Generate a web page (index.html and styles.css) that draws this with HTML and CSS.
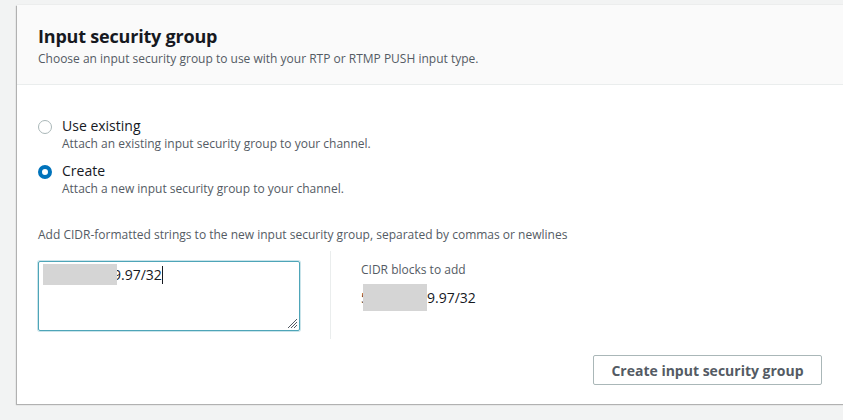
FILE: index.html
```html
<!DOCTYPE html>
<html>
<head>
<meta charset="utf-8">
<link rel="stylesheet" href="styles.css">
</head>
<body>
<div class="page">
  <section class="card">
    <header class="card-header">
      <h2 class="title">Input security group</h2>
      <p class="subtitle">Choose an input security group to use with your RTP or RTMP PUSH input type.</p>
    </header>
    <div class="card-body">
      <div class="radio-group">
        <label class="radio">
          <span class="radio-ctrl"></span>
          <span class="radio-text">
            <span class="radio-label">Use existing</span>
            <span class="radio-desc">Attach an existing input security group to your channel.</span>
          </span>
        </label>
        <label class="radio">
          <span class="radio-ctrl checked"></span>
          <span class="radio-text">
            <span class="radio-label">Create</span>
            <span class="radio-desc">Attach a new input security group to your channel.</span>
          </span>
        </label>
      </div>
      <p class="field-label">Add CIDR-formatted strings to the new input security group, separated by commas or newlines</p>
      <div class="cidr-row">
        <div class="cidr-left">
          <div class="textarea">
            <span class="redact redact-a"></span><span class="ta-text">9.97/32</span><span class="caret"></span>
            <svg class="grip" width="12" height="12" viewBox="0 0 12 12"><path d="M11 2 L2 11 M11 5 L5 11 M11 8 L8 11" stroke="#545b64" stroke-width="1" fill="none"/></svg>
          </div>
        </div>
        <div class="cidr-right">
          <div class="cidr-title">CIDR blocks to add</div>
          <div class="cidr-value"><span class="first">5</span><span class="redact redact-b"></span><span>9.97/32</span></div>
        </div>
      </div>
      <div class="actions">
        <button class="btn">Create input security group</button>
      </div>
    </div>
  </section>
</div>
</body>
</html>
```

FILE: styles.css
```css
* { box-sizing: border-box; }
html, body { margin: 0; padding: 0; }
body {
  background: #f2f3f3;
  font-family: "Open Sans", "Liberation Sans", Arial, sans-serif;
  color: #16191f;
  width: 843px;
  height: 420px;
  overflow: hidden;
}
.page {
  padding: 5px 0 0 17px;
}
.card {
  background: #fff;
  width: 832px;
  height: 399px;
  box-shadow: -1px 1px 1px rgba(0,0,0,0.25), 0 0 1px rgba(0,0,0,0.15);
  display: flex;
  flex-direction: column;
}
.card-header {
  background: #fafafa;
  border-bottom: 1px solid #eaeded;
  padding: 20px 20px 17px 21px;
}
.title {
  margin: 0;
  font-size: 18px;
  line-height: 22px;
  font-weight: 700;
  color: #16191f;
  letter-spacing: -0.2px;
}
.subtitle {
  margin: 4px 0 0;
  font-size: 12px;
  line-height: 16px;
  color: #545b64;
}
.card-body {
  padding: 31px 27px 0 21px;
  flex: 1;
  display: flex;
  flex-direction: column;
}
.radio-group {
  display: flex;
  flex-direction: column;
  gap: 9px;
}
.radio {
  display: flex;
  align-items: flex-start;
  gap: 10px;
}
.radio-ctrl {
  width: 14px;
  height: 14px;
  border-radius: 50%;
  border: 1.5px solid #aab7b8;
  margin-top: 4px;
  flex: none;
}
.radio-ctrl.checked {
  border: 4px solid #0073bb;
  background: #fff;
}
.radio-text {
  display: flex;
  flex-direction: column;
}
.radio-label {
  font-size: 14px;
  line-height: 20px;
  color: #16191f;
}
.radio-desc {
  font-size: 12px;
  line-height: 16px;
  color: #545b64;
}
.field-label {
  margin: 30px 0 0;
  font-size: 12px;
  line-height: 16px;
  color: #545b64;
}
.cidr-row {
  display: flex;
  margin-top: 8px;
  height: 88px;
}
.cidr-left {
  width: 292px;
  padding-top: 10px;
}
.textarea {
  position: relative;
  width: 262px;
  height: 70px;
  border: 1px solid #4ea5b8;
  box-shadow: 0 0 0 1px rgba(78,165,184,0.3);
  border-radius: 2px;
  padding: 2px 4px;
  display: flex;
  align-items: flex-start;
  font-size: 14px;
  line-height: 22px;
  color: #16191f;
}
.redact {
  display: inline-block;
  background: #d5d5d5;
  position: relative;
  z-index: 1;
}
.redact-a {
  width: 74px;
  height: 21px;
  margin-right: -4px;
}
.caret {
  display: inline-block;
  width: 1px;
  height: 18px;
  background: #16191f;
  margin-top: 2px;
}
.grip {
  position: absolute;
  right: 1px;
  bottom: 1px;
}
.cidr-right {
  border-left: 1px solid #eaeded;
  padding-left: 30px;
  padding-top: 11px;
}
.cidr-title {
  font-size: 12px;
  line-height: 16px;
  color: #545b64;
}
.cidr-value {
  display: flex;
  align-items: center;
  margin-top: 6px;
  font-size: 14px;
  line-height: 20px;
  color: #16191f;
}
.redact-b {
  width: 64px;
  height: 27px;
  margin-left: -6px;
}
.actions {
  display: flex;
  justify-content: flex-end;
  margin-top: 16px;
}
.btn {
  width: 229px;
  height: 30px;
  background: #fff;
  border: 1px solid #aab7b8;
  border-radius: 2px;
  font-family: inherit;
  font-size: 14px;
  font-weight: 700;
  color: #545b64;
  padding: 0;
}
```
